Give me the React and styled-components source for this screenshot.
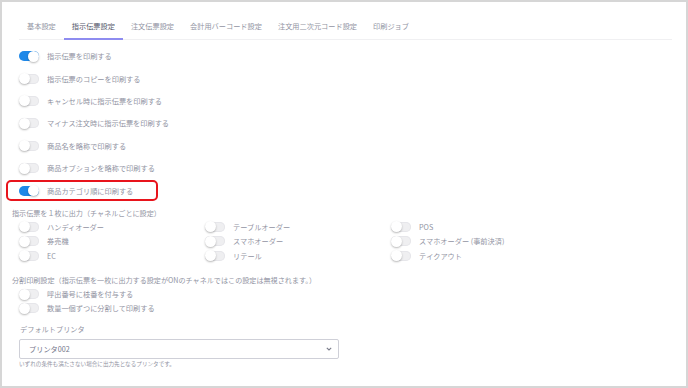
import React from 'react';
import styled, { createGlobalStyle } from 'styled-components';

const GlobalStyle = createGlobalStyle`
  body {
    margin: 0;
    background: #ffffff;
    font-family: "Noto Sans CJK JP", "Noto Sans", sans-serif;
  }
`;

// 外枠
const Frame = styled.div`
  width: 688px;
  height: 388px;
  box-sizing: border-box;
  border: 2px solid #d6d6d6;
  background: #fff;
  overflow: hidden;
`;

const TabBar = styled.div`
  display: flex;
  margin: 12px 14px 0 17px;
  border-bottom: 1px solid #f0f0f2;
`;

const Tab = styled.div`
  padding: 0 8px;
  height: 24px;
  line-height: 24px;
  font-size: 7.2px;
  color: ${p => (p.$active ? '#55576a' : '#9294a3')};
  border-bottom: 2px solid ${p => (p.$active ? '#8e8cf0' : 'transparent')};
  margin-bottom: -1px;
  white-space: nowrap;
`;

const ToggleList = styled.div`
  margin-top: 5px;
`;

const Row = styled.div`
  display: flex;
  align-items: center;
  gap: 8px;
  height: 22.4px;
  padding-left: 17px;
  box-sizing: border-box;
`;

const HighlightRow = styled(Row)`
  width: 152px;
  height: 20.4px;
  margin: 1px 0 1px 4px;
  padding-left: 11px;
  border: 2px solid #e8141c;
  border-radius: 5px;
`;

const Track = styled.span`
  position: relative;
  flex: none;
  width: 20px;
  height: 10px;
  border-radius: 5px;
  background: ${p => (p.$on ? '#1e88e8' : '#efeff1')};
  box-shadow: ${p => (p.$on ? 'none' : 'inset 0 0 0 1px #e6e6ea')};
`;

const Knob = styled.span`
  position: absolute;
  top: -0.5px;
  left: ${p => (p.$on ? '9px' : '0')};
  width: 11px;
  height: 11px;
  border-radius: 50%;
  background: #fff;
  box-shadow: 0 1px 2px rgba(0, 0, 0, 0.28);
`;

const Label = styled.span`
  font-size: 7.2px;
  color: #9294a3;
  white-space: nowrap;
`;

const Heading = styled.div`
  margin: ${p => p.$mt}px 0 0 10px;
  height: 14px;
  line-height: 14px;
  font-size: 7.1px;
  color: #9294a3;
  white-space: nowrap;
`;

const ChannelGrid = styled.div`
  display: grid;
  grid-template-columns: repeat(3, 186px);
  padding-left: 17px;
`;

const GridCell = styled.div`
  display: flex;
  align-items: center;
  gap: 8px;
  height: 14.5px;
`;

const SplitRow = styled(Row)`
  height: 14px;
`;

const PrinterLabel = styled.div`
  margin: 7px 0 0 18px;
  height: 14px;
  line-height: 14px;
  font-size: 7.2px;
  color: #9294a3;
`;

const Select = styled.div`
  display: flex;
  align-items: center;
  justify-content: space-between;
  margin: 3px 0 0 17px;
  width: 320px;
  height: 20px;
  box-sizing: border-box;
  padding: 0 6px 0 9px;
  border: 1px solid #cfd0d8;
  border-radius: 2px;
  font-size: 7.2px;
  color: #74768a;
`;

const Helper = styled.div`
  margin: 1px 0 0 17px;
  font-size: 5.6px;
  line-height: 8px;
  color: #9294a3;
`;

function Toggle({ on }) {
  return (
    <Track $on={on}>
      <Knob $on={on} />
    </Track>
  );
}

const tabs = ['基本設定', '指示伝票設定', '注文伝票設定', '会計用バーコード設定', '注文用二次元コード設定', '印刷ジョブ'];

const options = [
  { label: '指示伝票を印刷する', on: true },
  { label: '指示伝票のコピーを印刷する' },
  { label: 'キャンセル時に指示伝票を印刷する' },
  { label: 'マイナス注文時に指示伝票を印刷する' },
  { label: '商品名を略称で印刷する' },
  { label: '商品オプションを略称で印刷する' },
];

const channels = ['ハンディオーダー', 'テーブルオーダー', 'POS', '券売機', 'スマホオーダー', 'スマホオーダー (事前決済)', 'EC', 'リテール', 'テイクアウト'];

export default function App() {
  return (
    <>
      <GlobalStyle />
      <Frame>
        <TabBar>
          {tabs.map((t, i) => (
            <Tab key={t} $active={i === 1}>{t}</Tab>
          ))}
        </TabBar>

        <ToggleList>
          {options.map(o => (
            <Row key={o.label}>
              <Toggle on={o.on} />
              <Label>{o.label}</Label>
            </Row>
          ))}
          <HighlightRow>
            <Toggle on />
            <Label>商品カテゴリ順に印刷する</Label>
          </HighlightRow>
        </ToggleList>

        <Heading $mt={5}>指示伝票を１枚に出力（チャネルごとに設定）</Heading>
        <ChannelGrid>
          {channels.map(c => (
            <GridCell key={c}>
              <Toggle />
              <Label>{c}</Label>
            </GridCell>
          ))}
        </ChannelGrid>

        <Heading $mt={10}>分割印刷設定（指示伝票を一枚に出力する設定がONのチャネルではこの設定は無視されます。）</Heading>
        <SplitRow>
          <Toggle />
          <Label>呼出番号に枝番を付与する</Label>
        </SplitRow>
        <SplitRow>
          <Toggle />
          <Label>数量一個ずつに分割して印刷する</Label>
        </SplitRow>

        <PrinterLabel>デフォルトプリンタ</PrinterLabel>
        <Select>
          <span>プリンタ002</span>
          <svg width="6" height="4" viewBox="0 0 6 4">
            <path d="M0.8 0.8 L3 3 L5.2 0.8" fill="none" stroke="#7a7c8a" strokeWidth="1.1" />
          </svg>
        </Select>
        <Helper>いずれの条件も満たさない場合に出力先となるプリンタです。</Helper>
      </Frame>
    </>
  );
}
